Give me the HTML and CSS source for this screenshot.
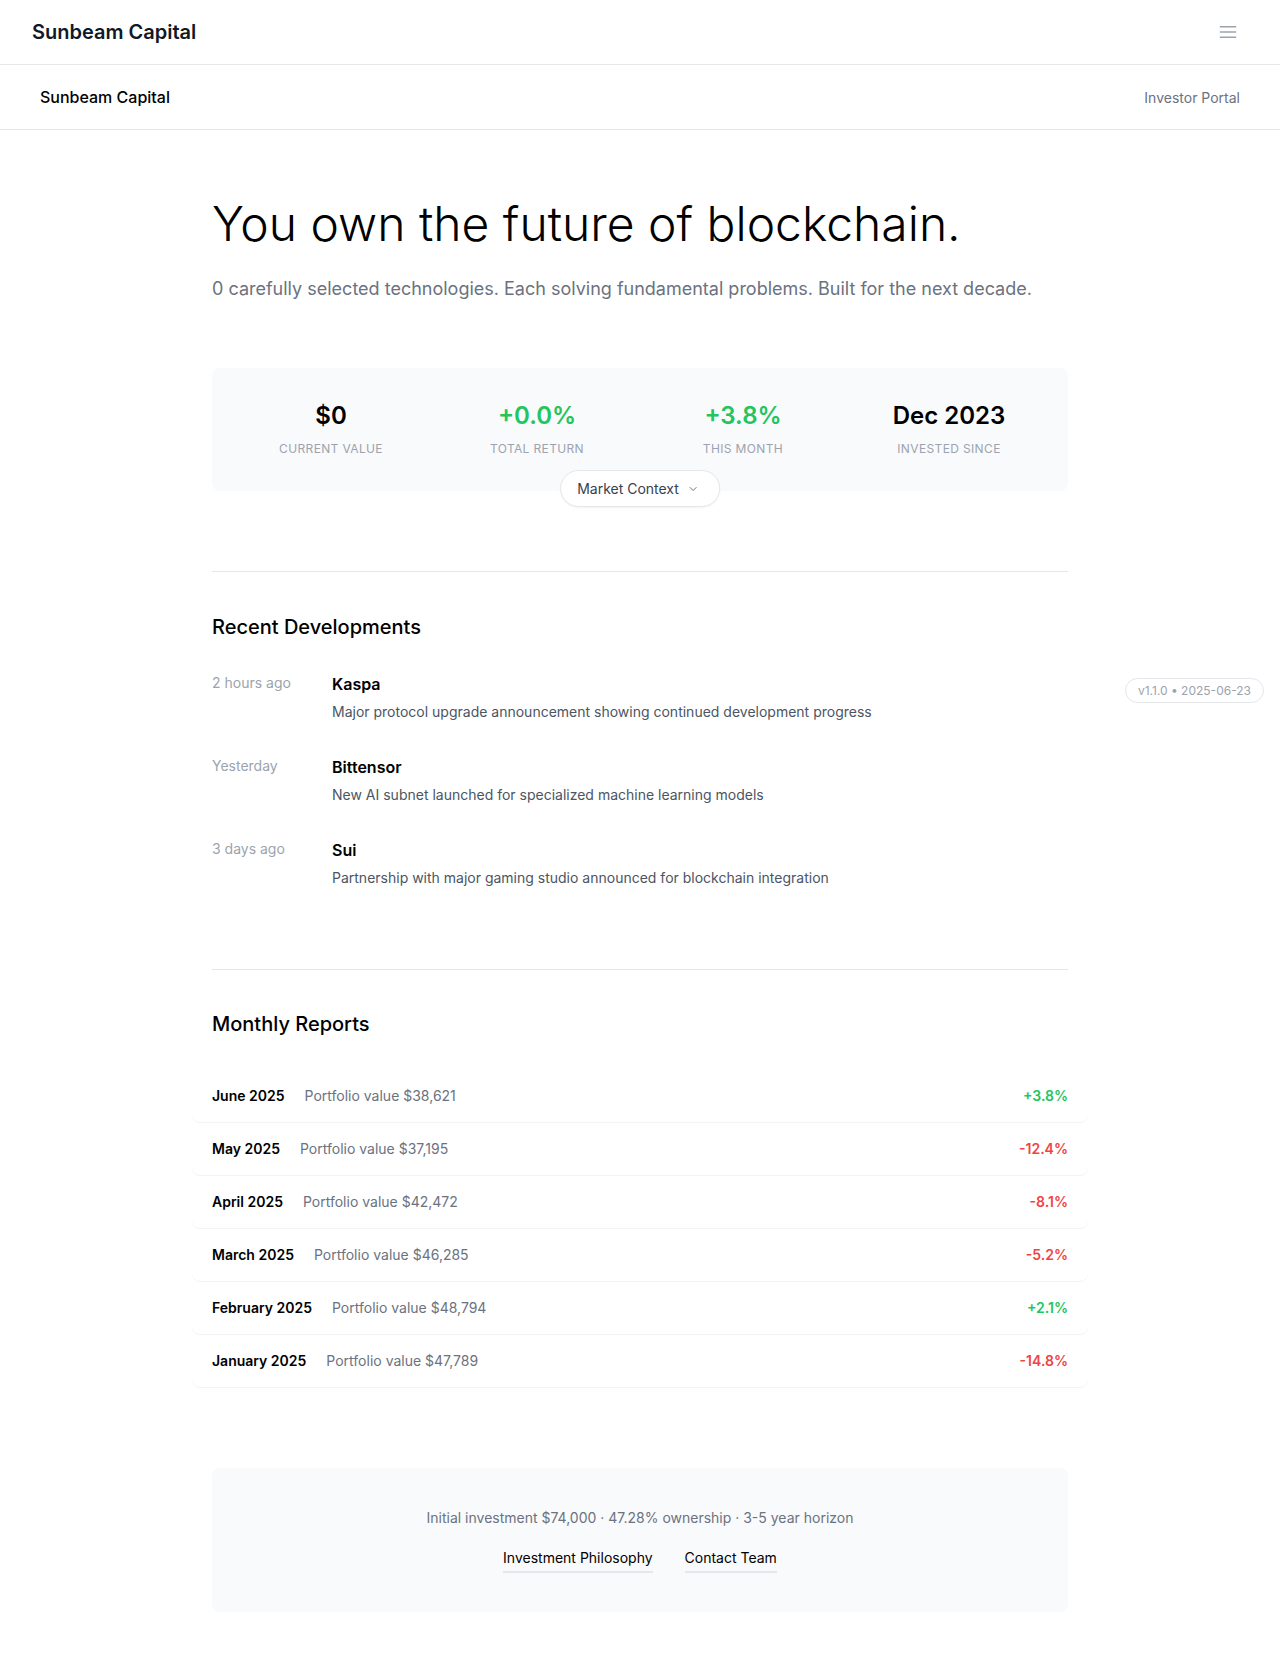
FILE: index.html
```html
<!DOCTYPE html>
<html lang="en">
<head>
<meta charset="utf-8">
<title>Sunbeam Capital</title>
<link rel="stylesheet" href="styles.css">
</head>
<body>
<header class="topbar">
  <div class="brand">Sunbeam Capital</div>
  <button class="menu-btn" aria-label="Menu">
    <svg width="24" height="24" viewBox="0 0 24 24" fill="none" stroke="#9ca3af" stroke-width="1.5" stroke-linecap="butt"><path d="M3.75 6.75h16.5M3.75 12h16.5M3.75 17.25h16.5"/></svg>
  </button>
</header>
<nav class="subbar">
  <div class="subbrand">Sunbeam Capital</div>
  <div class="portal">Investor Portal</div>
</nav>

<main class="main">
  <section class="hero">
    <h1 class="hero-title">You own the future of blockchain.</h1>
    <p class="hero-sub">0 carefully selected technologies. Each solving fundamental problems. Built for the next decade.</p>
  </section>

  <section class="stats-wrap">
    <div class="stats">
      <div class="stat"><div class="stat-value">$0</div><div class="stat-label">Current Value</div></div>
      <div class="stat"><div class="stat-value pos">+0.0%</div><div class="stat-label">Total Return</div></div>
      <div class="stat"><div class="stat-value pos">+3.8%</div><div class="stat-label">This Month</div></div>
      <div class="stat"><div class="stat-value">Dec 2023</div><div class="stat-label">Invested Since</div></div>
      <button class="context-btn">Market Context
        <svg width="12" height="12" viewBox="0 0 12 12" fill="none" stroke="#6b7280" stroke-width="1" stroke-linecap="round" stroke-linejoin="round"><path d="M3 4.5l3 3 3-3"/></svg>
      </button>
    </div>
  </section>

  <section class="section">
    <h2 class="section-title">Recent Developments</h2>
    <div class="devs">
      <div class="dev">
        <div class="dev-time">2 hours ago</div>
        <div class="dev-body">
          <div class="dev-name">Kaspa</div>
          <div class="dev-desc">Major protocol upgrade announcement showing continued development progress</div>
        </div>
      </div>
      <div class="dev">
        <div class="dev-time">Yesterday</div>
        <div class="dev-body">
          <div class="dev-name">Bittensor</div>
          <div class="dev-desc">New AI subnet launched for specialized machine learning models</div>
        </div>
      </div>
      <div class="dev">
        <div class="dev-time">3 days ago</div>
        <div class="dev-body">
          <div class="dev-name">Sui</div>
          <div class="dev-desc">Partnership with major gaming studio announced for blockchain integration</div>
        </div>
      </div>
    </div>
  </section>

  <section class="section reports-section">
    <h2 class="section-title">Monthly Reports</h2>
    <div class="reports">
      <div class="report"><span class="r-month">June 2025</span><span class="r-value">Portfolio value $38,621</span><span class="r-change pos">+3.8%</span></div>
      <div class="report"><span class="r-month">May 2025</span><span class="r-value">Portfolio value $37,195</span><span class="r-change neg">-12.4%</span></div>
      <div class="report"><span class="r-month">April 2025</span><span class="r-value">Portfolio value $42,472</span><span class="r-change neg">-8.1%</span></div>
      <div class="report"><span class="r-month">March 2025</span><span class="r-value">Portfolio value $46,285</span><span class="r-change neg">-5.2%</span></div>
      <div class="report"><span class="r-month">February 2025</span><span class="r-value">Portfolio value $48,794</span><span class="r-change pos">+2.1%</span></div>
      <div class="report"><span class="r-month">January 2025</span><span class="r-value">Portfolio value $47,789</span><span class="r-change neg">-14.8%</span></div>
    </div>
  </section>

  <footer class="footer-card">
    <p class="footer-text">Initial investment $74,000 · 47.28% ownership · 3-5 year horizon</p>
    <div class="footer-links">
      <a class="footer-link" href="#">Investment Philosophy</a>
      <a class="footer-link" href="#">Contact Team</a>
    </div>
  </footer>
</main>

<div class="version">v1.1.0 • 2025-06-23</div>
</body>
</html>
```

FILE: styles.css
```css
* { box-sizing: border-box; }
html, body { margin: 0; padding: 0; }
body {
  font-family: Inter, "Noto Sans", "Liberation Sans", sans-serif;
  color: #111827;
  background: #ffffff;
  position: relative;
  -webkit-font-smoothing: antialiased;
}

.topbar {
  height: 65px;
  border-bottom: 1px solid #e5e7eb;
  display: flex;
  align-items: center;
  justify-content: space-between;
  padding: 0 32px;
}
.brand { font-size: 20px; font-weight: 600; color: #111827; }
.menu-btn {
  border: 0; background: none; padding: 0; width: 24px; height: 24px;
  margin-right: 8px; display: flex; cursor: pointer;
}

.subbar {
  height: 65px;
  border-bottom: 1px solid #e5e7eb;
  display: flex;
  align-items: center;
  justify-content: space-between;
  padding: 0 40px;
}
.subbrand { font-size: 16px; font-weight: 500; color: #000; }
.portal { font-size: 14px; color: #6b7280; }

.main {
  max-width: 896px;
  margin: 0 auto;
  padding: 67px 20px 66px;
}

.hero-title {
  margin: 0;
  font-size: 48px;
  line-height: 53px;
  font-weight: 300;
  color: #000;
}
.hero-sub {
  margin: 25px 0 0;
  font-size: 18px;
  line-height: 28px;
  color: #6b7280;
}

.stats-wrap { margin-top: 65px; padding-bottom: 80px; }
.stats {
  position: relative;
  background: #f9fafb;
  border-radius: 8px;
  display: grid;
  grid-template-columns: repeat(4, 1fr);
  padding: 32px 16px 34px;
}
.stat { text-align: center; }
.stat-value { font-size: 24px; line-height: 32px; font-weight: 600; color: #000; }
.stat-label {
  margin-top: 9px;
  font-size: 12px; line-height: 16px;
  text-transform: uppercase;
  letter-spacing: 0.03em;
  color: #9ca3af;
}
.pos { color: #22c55e; }
.neg { color: #ef4444; }

.context-btn {
  position: absolute;
  left: 50%;
  bottom: -16px;
  transform: translateX(-50%);
  display: flex; align-items: center; gap: 8px;
  height: 37px;
  padding: 0 20px 0 16px;
  background: #fff;
  border: 1px solid #e5e7eb;
  border-radius: 999px;
  box-shadow: 0 1px 2px rgba(0,0,0,0.05);
  font-family: inherit;
  font-size: 14px;
  color: #374151;
  white-space: nowrap;
}

.section {
  border-top: 1px solid #e5e7eb;
  padding-top: 41px;
}
.section-title {
  margin: 0;
  font-size: 20px; line-height: 28px;
  font-weight: 500;
  color: #000;
}
.devs {
  margin-top: 31px;
  display: flex; flex-direction: column; gap: 33px;
  padding-bottom: 81px;
}
.dev { display: flex; }
.dev-time {
  width: 120px; flex: none;
  font-size: 14px; line-height: 20px;
  color: #9ca3af;
  padding-top: 1px;
}
.dev-name { font-size: 16px; line-height: 24px; font-weight: 600; color: #000; }
.dev-desc { margin-top: 6px; font-size: 14px; line-height: 20px; color: #4b5563; }

.reports-section { padding-top: 40px; }
.reports { margin: 31px -20px 0; }
.report {
  display: flex; align-items: center;
  height: 53px;
  padding: 0 20px;
  border-radius: 8px;
  box-shadow: 0 1px 1px rgba(0,0,0,0.05);
  font-size: 14px; line-height: 20px;
}
.r-month { font-weight: 600; color: #000; }
.r-value { margin-left: 20px; color: #6b7280; }
.r-change { margin-left: auto; font-weight: 600; }

.footer-card {
  margin-top: 81px;
  background: #f9fafb;
  border-radius: 8px;
  padding: 40px 20px 39px;
  text-align: center;
}
.footer-text { margin: 0; font-size: 14px; line-height: 20px; color: #6b7280; }
.footer-links {
  margin-top: 20px;
  display: flex; justify-content: center; gap: 32px;
}
.footer-link {
  font-size: 14px; line-height: 20px;
  color: #000;
  text-decoration: none;
  padding-bottom: 3px;
  border-bottom: 2px solid #e5e7eb;
}

.version {
  position: absolute;
  top: 678px;
  right: 16px;
  height: 25px;
  padding: 0 12px;
  display: flex; align-items: center;
  border: 1px solid #e5e7eb;
  border-radius: 999px;
  background: #fff;
  font-size: 12px;
  color: #9ca3af;
}
```
